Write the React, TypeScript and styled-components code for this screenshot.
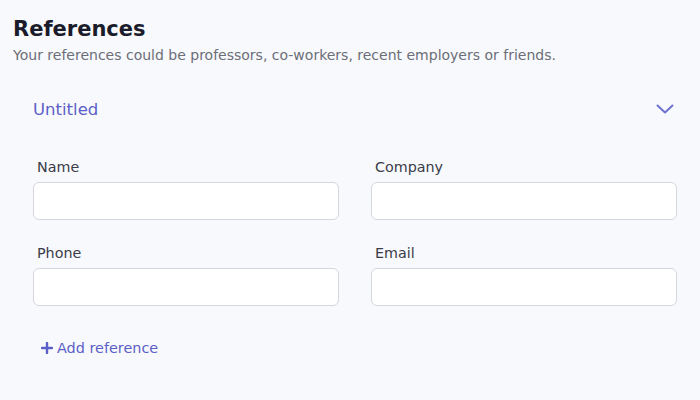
import React from "react";
import styled, { createGlobalStyle } from "styled-components";

const Global = createGlobalStyle`
  html, body { margin: 0; padding: 0; background: #f8f9fc; }
  body { font-family: "DejaVu Sans", "Open Sans", sans-serif; }
  * { box-sizing: border-box; }
`;

const Page = styled.div`
  width: 700px;
  height: 400px;
  padding: 18px 13px 0 13px;
  background: #f8f9fc;
`;

const Title = styled.h2`
  margin: 0;
  font-size: 21px;
  font-weight: 700;
  line-height: 22px;
  color: #1a1c2b;
`;

const Subtitle = styled.p`
  margin: 5px 0 0 0;
  font-size: 14px;
  line-height: 20px;
  color: #6b6e78;
`;

const Section = styled.div`
  padding: 0 10px 0 20px;
`;

const Header = styled.div`
  display: flex;
  align-items: center;
  justify-content: space-between;
  height: 24px;
  margin-top: 32px;
  padding-right: 3px;
`;

const ItemTitle = styled.span`
  font-size: 16.5px;
  color: #5b5fc7;
`;

const Grid = styled.div`
  display: grid;
  grid-template-columns: 1fr 1fr;
  column-gap: 32px;
  row-gap: 23px;
  margin-top: 36px;
`;

const Field = styled.div`
  display: flex;
  flex-direction: column;
`;

const Label = styled.label`
  font-size: 14.3px;
  line-height: 20px;
  color: #3a3c48;
  padding-left: 4px;
  margin-bottom: 5px;
`;

const Input = styled.input`
  height: 38px;
  border: 1px solid #d5d7de;
  border-radius: 6px;
  background: #fff;
  outline: none;
  font-size: 14px;
`;

const AddButton = styled.button`
  display: flex;
  align-items: center;
  gap: 4px;
  height: 20px;
  margin-top: 32px;
  margin-left: 8px;
  padding: 0;
  border: none;
  background: none;
  font-family: inherit;
  font-size: 14.4px;
  line-height: 20px;
  color: #5b5fc7;
  cursor: pointer;
`;

const fields = ["Name", "Company", "Phone", "Email"];

export default function App() {
  return (
    <>
      <Global />
      <Page>
        <Title>References</Title>
        <Subtitle>Your references could be professors, co-workers, recent employers or friends.</Subtitle>
        <Section>
          <Header>
            <ItemTitle>Untitled</ItemTitle>
            <svg width="18" height="10" viewBox="0 0 18 10" fill="none">
              <path d="M1.5 1.5 L9 8.5 L16.5 1.5" stroke="#6f72cf" strokeWidth="2" strokeLinecap="round" strokeLinejoin="round" />
            </svg>
          </Header>
          <Grid>
            {fields.map((f) => (
              <Field key={f}>
                <Label>{f}</Label>
                <Input />
              </Field>
            ))}
          </Grid>
          <AddButton>
            <svg width="12" height="12" viewBox="0 0 12 12">
              <path d="M6 1 V11 M1 6 H11" stroke="#5b5fc7" strokeWidth="2.4" strokeLinecap="round" />
            </svg>
            Add reference
          </AddButton>
        </Section>
      </Page>
    </>
  );
}
